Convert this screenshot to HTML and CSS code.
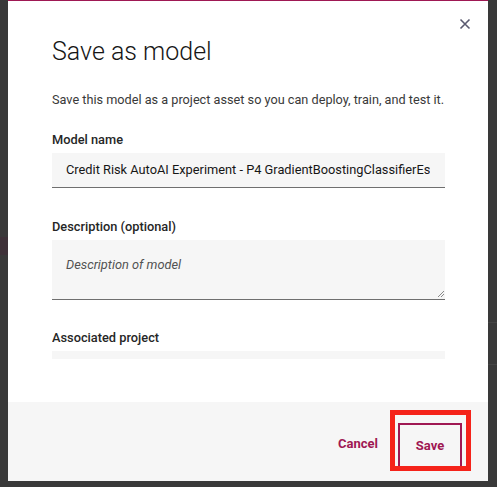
FILE: index.html
```html
<!DOCTYPE html>
<html>
<head>
<meta charset="utf-8">
<link rel="stylesheet" href="styles.css">
</head>
<body>
<div class="backdrop">
  <div class="bg-band"></div>
  <div class="bg-right">
    <span class="bg-line l1"></span>
    <span class="bg-line l2"></span>
  </div>
</div>
<div class="modal">
  <div class="modal-main">
    <button class="close" aria-label="Close">
      <svg width="12" height="12" viewBox="0 0 12 12"><path d="M1.5 1.5 L10.5 10.5 M10.5 1.5 L1.5 10.5" stroke="#5a5a70" stroke-width="1.6" fill="none"/></svg>
    </button>
    <h1 class="title">Save as model</h1>
    <p class="subtitle">Save this model as a project asset so you can deploy, train, and test it.</p>
    <div class="form">
      <label class="label">Model name</label>
      <div class="input"><span class="input-text">Credit Risk AutoAI Experiment - P4 GradientBoostingClassifierEstimator</span></div>
      <label class="label">Description (optional)</label>
      <div class="textarea">
        <span class="placeholder">Description of model</span>
        <svg class="grip" width="8" height="8" viewBox="0 0 8 8"><path d="M7 1 L1 7 M7 4 L4 7" stroke="#8a8a8a" stroke-width="1"/></svg>
      </div>
      <label class="label">Associated project</label>
      <div class="select"></div>
    </div>
  </div>
  <div class="footer">
    <button class="btn-ghost">Cancel</button>
    <button class="btn-outline">Save</button>
    <div class="highlight"></div>
  </div>
</div>
</body>
</html>
```

FILE: styles.css
```css
* { box-sizing: border-box; }
html, body { margin: 0; padding: 0; }
body {
  width: 497px;
  height: 487px;
  background: #393939;
  font-family: Roboto, "Noto Sans", sans-serif;
  position: relative;
  overflow: hidden;
}
.backdrop { position: absolute; inset: 0; }
.bg-band {
  position: absolute; left: 0; top: 237px; width: 8px; height: 18px;
  background: #3e3138;
}
.bg-right { position: absolute; left: 488px; top: 0; width: 9px; height: 487px; }
.bg-line { position: absolute; left: 0; width: 9px; height: 1px; background: #454545; }
.l1 { top: 322px; }
.l2 { top: 364px; }

.modal {
  position: absolute;
  left: 8px; top: 0;
  width: 480px; height: 481px;
  background: #ffffff;
  border-top: 1px solid #9f1853;
  display: flex;
  flex-direction: column;
}
.modal-main {
  position: relative;
  flex: 1;
  padding: 35px 43px 0 44px;
  overflow: hidden;
}
.close {
  position: absolute;
  right: 16px; top: 16px;
  width: 14px; height: 14px;
  padding: 0; border: 0; background: none;
  display: flex; align-items: center; justify-content: center;
}
.title {
  margin: 0;
  font-size: 25px;
  line-height: 32px;
  font-weight: 300;
  color: #161616;
}
.subtitle {
  margin: 22px 0 0;
  font-size: 12.7px;
  line-height: 20px;
  color: #393939;
  white-space: nowrap;
}
.form {
  height: 249px;
  overflow: hidden;
  padding-top: 21px;
}
.label {
  display: block;
  font-size: 12.8px;
  line-height: 18px;
  font-weight: 500;
  color: #262626;
  margin-bottom: 4px;
}
.input {
  height: 35px;
  width: 394px;
  background: #f6f6f6;
  border-bottom: 1px solid #6f6f6f;
  margin-left: -1px;
  padding: 0 15px;
  margin-bottom: 30px;
}
.input-text {
  display: block;
  font-size: 12.8px;
  line-height: 34px;
  color: #161616;
  white-space: nowrap;
  overflow: hidden;
}
.textarea {
  position: relative;
  height: 60px;
  width: 394px;
  margin-left: -1px;
  background: #f6f6f6;
  border-bottom: 1px solid #6f6f6f;
  padding: 14px 15px;
  margin-bottom: 29px;
}
.placeholder {
  font-size: 12.8px;
  line-height: 18px;
  font-style: italic;
  color: #525252;
}
.grip { position: absolute; right: 0; bottom: 1px; }
.select {
  height: 40px;
  width: 394px;
  margin-left: -1px;
  margin-top: 1px;
  background: #f6f6f6;
}
.footer {
  position: relative;
  height: 79px;
  flex: none;
  background: #f6f6f6;
  display: flex;
  align-items: center;
  justify-content: flex-end;
  padding-right: 26px;
}
.btn-ghost, .btn-outline {
  font-family: inherit;
  font-size: 13px;
  font-weight: 700;
  color: #9f1853;
  background: none;
  cursor: pointer;
}
.btn-ghost {
  border: 0;
  padding: 0;
  margin-right: 20px;
  margin-top: 4px;
}
.btn-outline {
  width: 64px;
  height: 45px;
  border: 2px solid #9f1853;
  padding: 0;
  margin-top: 7px;
}
.highlight {
  position: absolute;
  left: 382px; top: 8px;
  width: 81px; height: 61px;
  border: 5px solid #f5231a;
  pointer-events: none;
}
```
